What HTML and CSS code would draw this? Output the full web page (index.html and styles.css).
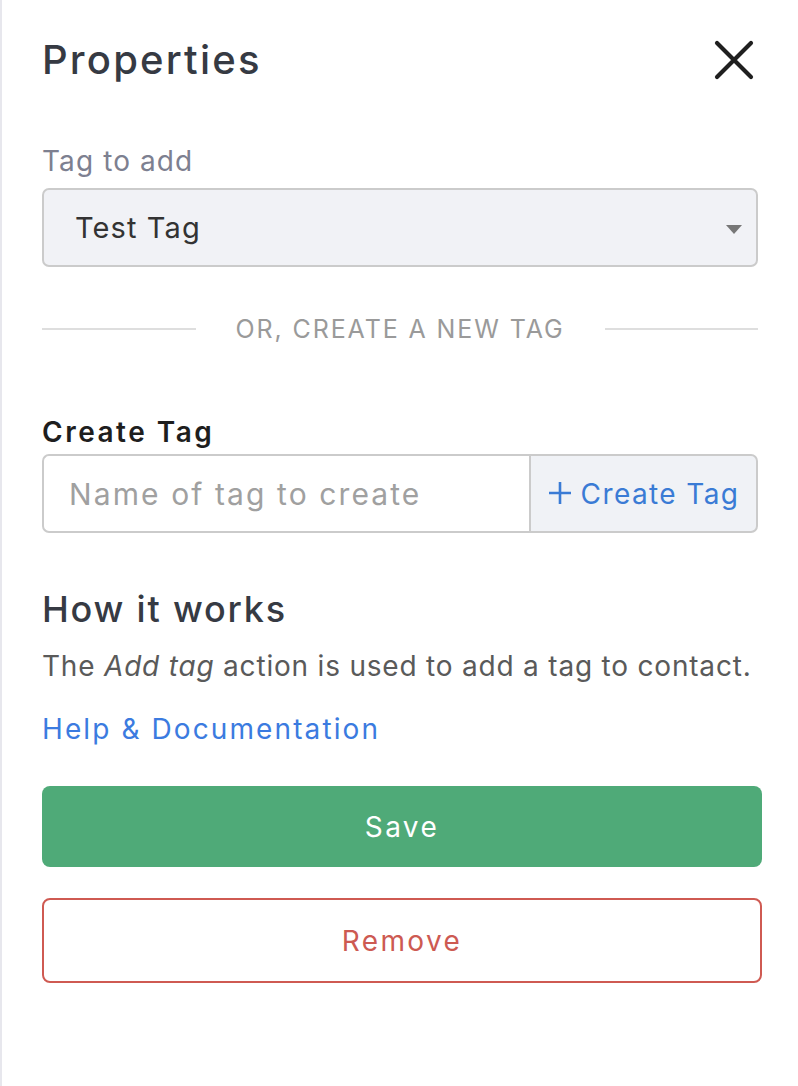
FILE: index.html
```html
<!DOCTYPE html>
<html>
<head>
<meta charset="utf-8">
<link rel="stylesheet" href="styles.css">
</head>
<body>
<div class="panel">
  <div class="header">
    <h1 class="title">Properties</h1>
    <button class="close" aria-label="Close">
      <svg width="40" height="40" viewBox="0 0 40 40"><path d="M3 3 L37 37 M37 3 L3 37" stroke="#1f1f1f" stroke-width="4.2" stroke-linecap="round" fill="none"/></svg>
    </button>
  </div>

  <div class="field">
    <div class="label">Tag to add</div>
    <div class="select">
      <span class="select-value">Test Tag</span>
      <span class="caret"></span>
    </div>
  </div>

  <div class="divider">
    <span class="line"></span>
    <span class="divider-text">OR, CREATE A NEW TAG</span>
    <span class="line"></span>
  </div>

  <div class="field create">
    <div class="label strong">Create Tag</div>
    <div class="input-group">
      <div class="input"><span class="placeholder">Name of tag to create</span></div>
      <div class="addon">
        <svg class="plus" width="24" height="24" viewBox="0 0 24 24"><path d="M12 1 V23 M1 12 H23" stroke="#3a7bd5" stroke-width="2.6" fill="none"/></svg>
        <span>Create Tag</span>
      </div>
    </div>
  </div>

  <h2 class="subtitle">How it works</h2>
  <p class="desc">The <em>Add tag</em> action is used to add a tag to contact.</p>
  <a class="link">Help &amp; Documentation</a>

  <div class="actions">
    <button class="btn save">Save</button>
    <button class="btn remove">Remove</button>
  </div>
</div>
</body>
</html>
```

FILE: styles.css
```css
html, body {
  margin: 0;
  padding: 0;
  background: #fff;
}
body {
  font-family: "Inter", "Open Sans", sans-serif;
}
.panel {
  box-sizing: border-box;
  width: 798px;
  min-height: 1086px;
  border-left: 2px solid #e7e7ed;
  padding: 38px 40px 0 40px;
}
.header {
  display: flex;
  align-items: center;
  justify-content: space-between;
  height: 44px;
}
.title {
  margin: 0;
  font-size: 40px;
  font-weight: 500;
  color: #363a43;
  letter-spacing: 2.2px;
  line-height: 44px;
}
.close {
  border: 0;
  background: none;
  padding: 0;
  width: 40px;
  height: 40px;
  margin-right: 4px;
  display: flex;
}
.field {
  margin-top: 62px;
}
.label {
  font-size: 28px;
  color: #7d8090;
  line-height: 34px;
  letter-spacing: 1.1px;
}
.label.strong {
  color: #1e1e1e;
  font-weight: 600;
  letter-spacing: 2.5px;
}
.select {
  margin-top: 10px;
  height: 79px;
  box-sizing: border-box;
  border: 2px solid #cbcbcb;
  border-radius: 7px;
  background: #f1f2f6;
  display: flex;
  align-items: center;
  justify-content: space-between;
  padding: 0 14px 0 31px;
}
.select-value {
  font-size: 29px;
  color: #333;
  letter-spacing: 1.1px;
}
.caret {
  width: 0;
  height: 0;
  border-left: 8px solid transparent;
  border-right: 8px solid transparent;
  border-top: 9px solid #777;
  margin-top: 4px;
}
.divider {
  display: flex;
  align-items: center;
  margin-top: 47px;
  height: 30px;
}
.line {
  flex: 1;
  height: 2px;
  background: #dedede;
}
.divider-text {
  font-size: 25px;
  color: #9a9a9a;
  letter-spacing: 1.9px;
  padding: 0 40px;
}
.create {
  margin-top: 71px;
}
.input-group {
  display: flex;
  margin-top: 5px;
  height: 79px;
}
.input {
  flex: 0 0 487px;
  box-sizing: border-box;
  border: 2px solid #cbcbcb;
  border-right: 0;
  border-radius: 7px 0 0 7px;
  display: flex;
  align-items: center;
  padding-left: 25px;
}
.placeholder {
  font-size: 30px;
  color: #a0a0a0;
  letter-spacing: 2.1px;
}
.addon {
  flex: 1;
  box-sizing: border-box;
  border: 2px solid #cbcbcb;
  border-radius: 0 7px 7px 0;
  background: #f0f2f6;
  color: #3a7bd5;
  font-size: 28px;
  letter-spacing: 1.4px;
  display: flex;
  align-items: center;
  justify-content: center;
  gap: 9px;
}
.plus {
  display: block;
  margin-top: -2px;
}
.subtitle {
  margin: 54px 0 0 0;
  font-size: 36px;
  font-weight: 500;
  color: #363a43;
  letter-spacing: 1.8px;
  line-height: 44px;
}
.desc {
  margin: 18px 0 0 0;
  font-size: 28px;
  color: #5a5a5a;
  line-height: 34px;
  letter-spacing: 0.8px;
}
.desc em {
  font-style: italic;
}
.link {
  display: block;
  margin-top: 29px;
  font-size: 28px;
  color: #3b7be0;
  line-height: 34px;
  letter-spacing: 2.1px;
}
.actions {
  display: flex;
  flex-direction: column;
  gap: 31px;
  margin-top: 40px;
  margin-right: -4px;
}
.btn {
  font-family: inherit;
  font-size: 28px;
  letter-spacing: 2.4px;
  border-radius: 8px;
  cursor: pointer;
}
.save {
  height: 81px;
  background: #4faa78;
  color: #fff;
  border: 0;
}
.remove {
  height: 85px;
  background: #fff;
  color: #cd5a52;
  border: 2px solid #cf5a52;
}
```
